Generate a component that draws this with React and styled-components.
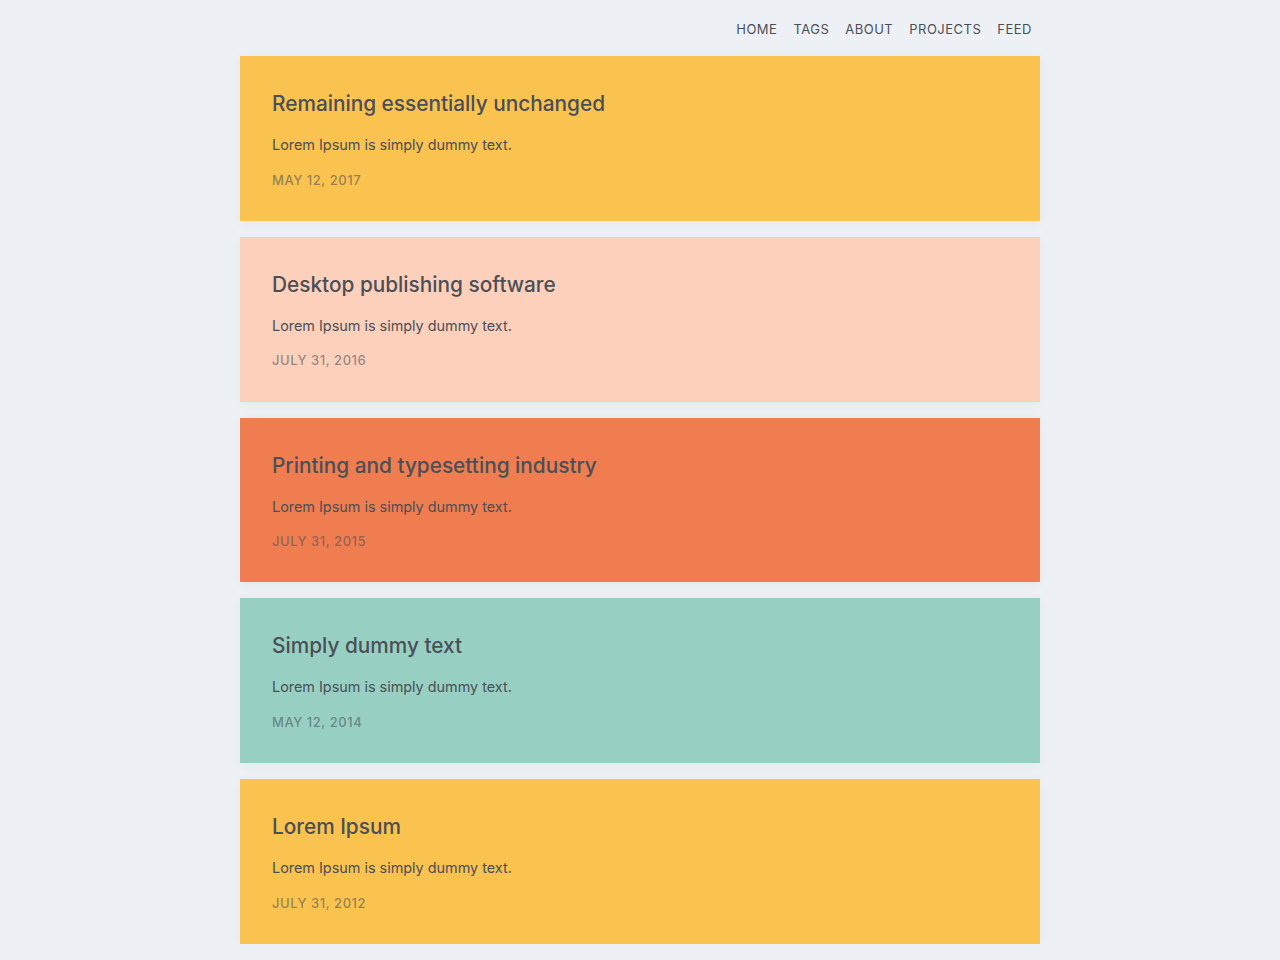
import styled, { createGlobalStyle } from "styled-components";

const GlobalStyle = createGlobalStyle`
  body {
    margin: 0;
    background: #edf1f5;
    font-family: Inter, "Noto Sans", sans-serif;
    color: #4a4f57;
  }
`;

const Page = styled.div`
  width: 800px;
  margin: 0 auto;
`;

const Header = styled.header`
  height: 56px;
  padding-top: 2px;
  box-sizing: border-box;
  display: flex;
  align-items: center;
  justify-content: flex-end;
`;

const NavLink = styled.a`
  padding: 0 8px;
  font-size: 13px;
  letter-spacing: 0.5px;
  text-transform: uppercase;
  color: #4a4f57;
  text-decoration: none;
`;

const List = styled.div`
  display: flex;
  flex-direction: column;
  gap: 16px;
`;

const Card = styled.article`
  background: ${(p) => p.bg};
  padding: 32px;
  box-shadow: 0 2px 10px rgba(60, 80, 110, 0.06);
`;

const Title = styled.h2`
  margin: 0;
  padding-top: 1px;
  font-size: 20.8px;
  font-weight: 500;
  line-height: 30px;
  color: #4a4f57;
`;

const Excerpt = styled.p`
  margin: 15px 0 0;
  font-size: 14.4px;
  line-height: 21px;
  color: #4a4f57;
`;

const PostDate = styled.div`
  margin-top: 15.5px;
  font-size: 13px;
  line-height: 18.25px;
  letter-spacing: 0.55px;
  text-transform: uppercase;
  font-weight: 500;
  color: rgba(74, 79, 87, 0.58);
`;

const posts = [
  { title: "Remaining essentially unchanged", date: "May 12, 2017", bg: "#fac24e" },
  { title: "Desktop publishing software", date: "July 31, 2016", bg: "#fcd0ba" },
  { title: "Printing and typesetting industry", date: "July 31, 2015", bg: "#f07d4f" },
  { title: "Simply dummy text", date: "May 12, 2014", bg: "#97d0c2" },
  { title: "Lorem Ipsum", date: "July 31, 2012", bg: "#fac24e" },
];

export default function App() {
  return (
    <>
      <GlobalStyle />
      <Page>
        <Header>
          <NavLink href="#">Home</NavLink>
          <NavLink href="#">Tags</NavLink>
          <NavLink href="#">About</NavLink>
          <NavLink href="#">Projects</NavLink>
          <NavLink href="#">Feed</NavLink>
        </Header>
        <List>
          {posts.map((p) => (
            <Card key={p.title} bg={p.bg}>
              <Title>{p.title}</Title>
              <Excerpt>Lorem Ipsum is simply dummy text.</Excerpt>
              <PostDate>{p.date}</PostDate>
            </Card>
          ))}
        </List>
      </Page>
    </>
  );
}
